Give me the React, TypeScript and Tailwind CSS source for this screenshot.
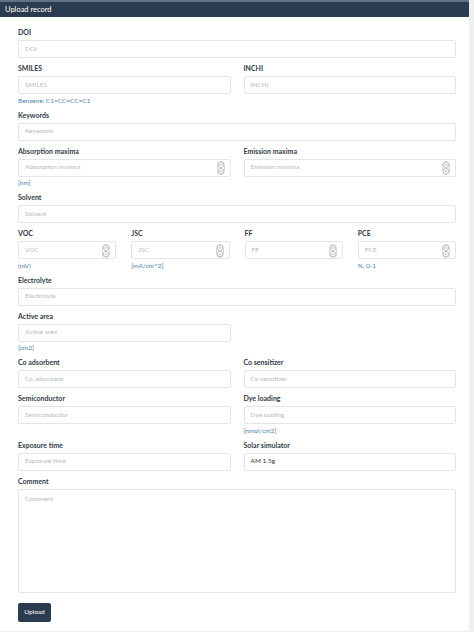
import React from 'react';

const Spinner: React.FC = () => (
  <svg width="8" height="14" viewBox="0 0 8 14" className="absolute right-[5px] top-[1.5px]">
    <rect x="0.5" y="0.5" width="7" height="13" rx="3.5" fill="white" stroke="#aab2bb" strokeWidth="0.5" />
    <circle cx="4" cy="4" r="2.7" fill="none" stroke="#8a939c" strokeWidth="0.5" />
    <circle cx="4" cy="10" r="2.7" fill="none" stroke="#8a939c" strokeWidth="0.5" />
    <path d="M2.9 4.5 L4 3.4 L5.1 4.5" fill="none" stroke="#666" strokeWidth="0.6" />
    <path d="M2.9 9.5 L4 10.6 L5.1 9.5" fill="none" stroke="#666" strokeWidth="0.6" />
  </svg>
);

type FieldProps = {
  label: string;
  placeholder?: string;
  value?: string;
  hint?: string;
  number?: boolean;
};

const Field: React.FC<FieldProps> = ({ label, placeholder, value, hint, number }) => (
  <div className="flex flex-col">
    <div className="text-[7px] leading-[9px] font-bold text-[#2f3b48] mb-[3px]">{label}</div>
    <div className="relative h-[18px] border border-[#e2e5e9] rounded-[2px] bg-white flex items-center px-[6px]">
      {value ? (
        <span className="text-[6.5px] leading-none text-[#333]">{value}</span>
      ) : (
        <span className="text-[6.5px] leading-none text-[#b3bac2]">{placeholder ?? label}</span>
      )}
      {number && <Spinner />}
    </div>
    {hint && <div className="mt-[2.5px] text-[6.5px] leading-[8px] text-[#4a82a6]">{hint}</div>}
  </div>
);

const App: React.FC = () => {
  return (
    <div className="min-h-[632px] w-[474px] bg-[#eef0f2] leading-none" style={{ fontFamily: 'Lato, "Open Sans", sans-serif' }}>
      <div className="w-[469px] bg-white pb-[9px]">
        <div className="h-[17px] bg-[#2c3c50] border-t-2 border-[#617285] flex items-center px-[5px]">
          <span className="text-[7.5px] text-white">Upload record</span>
        </div>

        <div className="pl-[18px] pr-[13px] pt-[11px] flex flex-col gap-y-[6px]">
          <Field label="DOI" />

          <div className="grid grid-cols-2 gap-x-[13px]">
            <Field label="SMILES" hint="Benzene: C1=CC=CC=C1" />
            <Field label="INCHI" />
          </div>

          <Field label="Keywords" />

          <div className="grid grid-cols-2 gap-x-[13px]">
            <Field label="Absorption maxima" number hint="[nm]" />
            <Field label="Emission maxima" number />
          </div>

          <Field label="Solvent" />

          <div className="grid grid-cols-4 gap-x-[15px]">
            <Field label="VOC" number hint="(mV)" />
            <Field label="JSC" number hint="[mA/cm^2]" />
            <Field label="FF" number />
            <Field label="PCE" number hint="%, 0-1" />
          </div>

          <Field label="Electrolyte" />

          <div className="grid grid-cols-2 gap-x-[13px]">
            <Field label="Active area" hint="[cm2]" />
            <div />
          </div>

          <div className="grid grid-cols-2 gap-x-[13px]">
            <Field label="Co adsorbent" />
            <Field label="Co sensitizer" />
          </div>

          <div className="grid grid-cols-2 gap-x-[13px]">
            <Field label="Semiconductor" />
            <Field label="Dye loading" hint="[nmol/cm2]" />
          </div>

          <div className="grid grid-cols-2 gap-x-[13px]">
            <Field label="Exposure time" />
            <Field label="Solar simulator" value="AM 1.5g" />
          </div>

          <div className="flex flex-col">
            <div className="text-[7px] leading-[9px] font-bold text-[#2f3b48] mb-[3px]">Comment</div>
            <div className="h-[104px] border border-[#e2e5e9] rounded-[2px] bg-white px-[6px] pt-[6px] text-[6.5px] leading-none text-[#b3bac2]">
              Comment
            </div>
          </div>

          <div className="flex mt-[4px]">
            <button className="h-[19px] w-[33px] rounded-[2px] bg-[#2c3c50] text-white text-[6.5px] leading-none">Upload</button>
          </div>
        </div>
      </div>
    </div>
  );
};

export default App;
